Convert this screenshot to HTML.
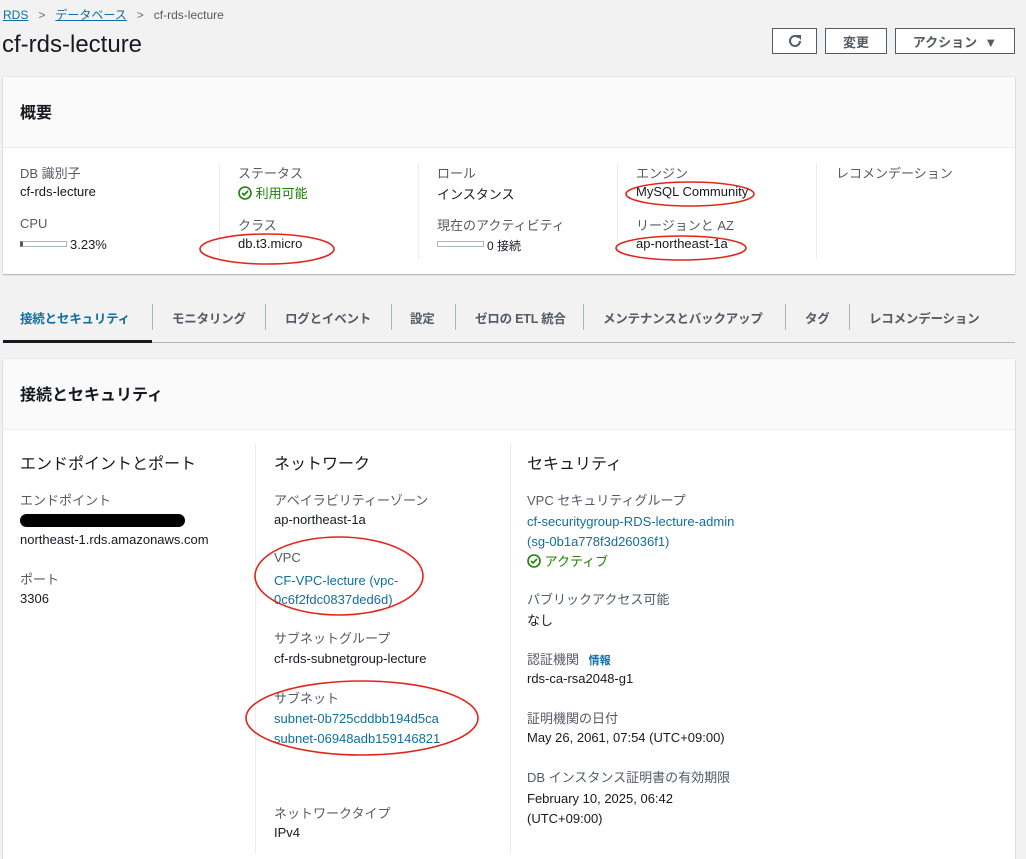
<!DOCTYPE html><html><head><meta charset="utf-8"><style>
body{margin:0;width:1026px;height:849px;background:#f2f2f2;font-family:"Liberation Sans","Noto Sans CJK JP",sans-serif;font-size:13px;color:#16191f;position:relative;overflow:hidden}
.a{position:absolute;white-space:nowrap}
.l{color:#545b64}
.k{color:#0f6f9e}
.g{color:#1d8102}
.card{position:absolute;left:3px;width:1012px;background:#fff;box-shadow:0 1px 1px rgba(0,0,0,.25),0 0 1px rgba(0,0,0,.2)}
.hd{background:#fafafa;border-bottom:1px solid #eaeded}
.vl{position:absolute;width:1px;background:#eaeded}
.btn{position:absolute;top:28px;height:26px;border:1px solid #545b64;background:#fff;font-weight:bold;font-size:13px;display:flex;align-items:center;justify-content:center;box-sizing:border-box;color:#545b64}
.bar{position:absolute;height:6px;border:1px solid #aab7b8;background:#fff;box-sizing:border-box}
.tab{position:absolute;top:308px;font-weight:bold;color:#545b64;font-size:12.5px;letter-spacing:-0.2px}
.ts{position:absolute;top:304px;height:26px;width:1px;background:#aab7b8}
</style></head><body>
<div class="a" style="left:3px;top:6px;font-size:12px"><span class="k" style="text-decoration:underline">RDS</span><span style="color:#687078;margin:0 10px">&gt;</span><span class="k" style="text-decoration:underline">データベース</span><span style="color:#687078;margin:0 10px">&gt;</span><span style="color:#545b64">cf-rds-lecture</span></div>
<div class="a" style="left:2px;top:31px;font-size:24px">cf-rds-lecture</div>
<div class="btn" style="left:772px;width:45px"><svg width="16" height="16" viewBox="0 0 16 16"><path d="M13 8a5 5 0 1 1-1.5-3.6" fill="none" stroke="#545b64" stroke-width="2"/><path d="M9 2h5v5z" fill="#545b64"/></svg></div>
<div class="btn" style="left:825px;width:62px">変更</div>
<div class="btn" style="left:895px;width:120px">アクション&nbsp;&nbsp;▼</div>

<div class="card" style="top:77px;height:197px">
<div class="hd" style="height:70px"><div class="a" style="left:17px;top:22px;font-size:16px;font-weight:bold">概要</div></div>
<div class="vl" style="left:216px;top:86px;height:96px"></div>
<div class="vl" style="left:415px;top:86px;height:96px"></div>
<div class="vl" style="left:614px;top:86px;height:96px"></div>
<div class="vl" style="left:813px;top:86px;height:96px"></div>
</div>
<div class="a l" style="left:20px;top:163px">DB 識別子</div>
<div class="a" style="left:20px;top:184px">cf-rds-lecture</div>
<div class="a l" style="left:20px;top:216px">CPU</div>
<div class="bar" style="left:20px;top:241px;width:47px;border-left:3px solid #545b64"></div>
<div class="a" style="left:70px;top:237px">3.23%</div>
<div class="a l" style="left:238px;top:163px">ステータス</div>
<div class="a g" style="left:238px;top:183px"><svg width="14" height="14" viewBox="0 0 14 14" style="vertical-align:-2px"><circle cx="7" cy="7" r="6" fill="none" stroke="#1d8102" stroke-width="1.6"/><path d="M4 7l2 2 4-4" fill="none" stroke="#1d8102" stroke-width="1.6"/></svg> 利用可能</div>
<div class="a l" style="left:238px;top:215px">クラス</div>
<div class="a" style="left:238px;top:236px">db.t3.micro</div>
<div class="a l" style="left:437px;top:163px">ロール</div>
<div class="a" style="left:437px;top:184px">インスタンス</div>
<div class="a l" style="left:437px;top:215px">現在のアクティビティ</div>
<div class="bar" style="left:437px;top:241px;width:47px"></div>
<div class="a" style="left:487px;top:237px;font-size:12px">0 接続</div>
<div class="a l" style="left:636px;top:163px">エンジン</div>
<div class="a" style="left:636px;top:184px">MySQL Community</div>
<div class="a l" style="left:636px;top:215px">リージョンと AZ</div>
<div class="a" style="left:636px;top:236px">ap-northeast-1a</div>
<div class="a l" style="left:836px;top:163px">レコメンデーション</div>

<div class="tab" style="left:20px;color:#0f6f9e">接続とセキュリティ</div>
<div class="ts" style="left:152px"></div>
<div class="tab" style="left:172px">モニタリング</div>
<div class="ts" style="left:265px"></div>
<div class="tab" style="left:285px">ログとイベント</div>
<div class="ts" style="left:391px"></div>
<div class="tab" style="left:410px">設定</div>
<div class="ts" style="left:455px"></div>
<div class="tab" style="left:475px">ゼロの ETL 統合</div>
<div class="ts" style="left:583px"></div>
<div class="tab" style="left:603px">メンテナンスとバックアップ</div>
<div class="ts" style="left:785px"></div>
<div class="tab" style="left:805px">タグ</div>
<div class="ts" style="left:849px"></div>
<div class="tab" style="left:869px">レコメンデーション</div>
<div class="a" style="left:3px;top:342px;width:1012px;height:1px;background:#aab7b8"></div>
<div class="a" style="left:3px;top:340px;width:149px;height:3px;background:#16191f"></div>

<div class="card" style="top:359px;height:500px">
<div class="hd" style="height:70px"><div class="a" style="left:17px;top:22px;font-size:16px;font-weight:bold">接続とセキュリティ</div></div>
<div class="vl" style="left:252px;top:85px;height:410px"></div>
<div class="vl" style="left:507px;top:85px;height:410px"></div>
</div>
<div class="a" style="left:20px;top:450px;font-size:16px">エンドポイントとポート</div>
<div class="a l" style="left:20px;top:490px">エンドポイント</div>
<div class="a" style="left:20px;top:514px;width:165px;height:13px;border-radius:7px;background:#000"></div>
<div class="a" style="left:20px;top:532px">northeast-1.rds.amazonaws.com</div>
<div class="a l" style="left:20px;top:569px">ポート</div>
<div class="a" style="left:20px;top:591px">3306</div>

<div class="a" style="left:274px;top:450px;font-size:16px">ネットワーク</div>
<div class="a l" style="left:274px;top:490px">アベイラビリティーゾーン</div>
<div class="a" style="left:274px;top:512px">ap-northeast-1a</div>
<div class="a l" style="left:274px;top:550px">VPC</div>
<div class="a k" style="left:274px;top:571px;line-height:19px">CF-VPC-lecture (vpc-<br>0c6f2fdc0837ded6d)</div>
<div class="a l" style="left:274px;top:628px">サブネットグループ</div>
<div class="a" style="left:274px;top:651px">cf-rds-subnetgroup-lecture</div>
<div class="a l" style="left:274px;top:688px">サブネット</div>
<div class="a k" style="left:274px;top:709px;line-height:20px">subnet-0b725cddbb194d5ca<br>subnet-06948adb159146821</div>
<div class="a l" style="left:274px;top:803px">ネットワークタイプ</div>
<div class="a" style="left:274px;top:825px">IPv4</div>

<div class="a" style="left:527px;top:450px;font-size:16px">セキュリティ</div>
<div class="a l" style="left:527px;top:490px">VPC セキュリティグループ</div>
<div class="a k" style="left:527px;top:512px;line-height:20px">cf-securitygroup-RDS-lecture-admin<br>(sg-0b1a778f3d26036f1)</div>
<div class="a g" style="left:527px;top:551px"><svg width="14" height="14" viewBox="0 0 14 14" style="vertical-align:-2px"><circle cx="7" cy="7" r="6" fill="none" stroke="#1d8102" stroke-width="1.6"/><path d="M4 7l2 2 4-4" fill="none" stroke="#1d8102" stroke-width="1.6"/></svg> アクティブ</div>
<div class="a l" style="left:527px;top:589px">パブリックアクセス可能</div>
<div class="a" style="left:527px;top:610px">なし</div>
<div class="a l" style="left:527px;top:649px">認証機関 <b class="k" style="font-size:11px;margin-left:6px">情報</b></div>
<div class="a" style="left:527px;top:671px">rds-ca-rsa2048-g1</div>
<div class="a l" style="left:527px;top:708px">証明機関の日付</div>
<div class="a" style="left:527px;top:730px">May 26, 2061, 07:54 (UTC+09:00)</div>
<div class="a l" style="left:527px;top:767px">DB インスタンス証明書の有効期限</div>
<div class="a" style="left:527px;top:789px;line-height:20px">February 10, 2025, 06:42<br>(UTC+09:00)</div>

<svg class="a" style="left:0;top:0" width="1026" height="849"><g fill="none" stroke="#e0261b" stroke-width="1.6">
<ellipse cx="267" cy="249" rx="67" ry="15"/>
<ellipse cx="690" cy="194" rx="64" ry="12"/>
<ellipse cx="681" cy="248" rx="65" ry="12"/>
<ellipse cx="339" cy="576" rx="84" ry="39"/>
<ellipse cx="362" cy="718" rx="116" ry="37"/>
</g></svg>
</body></html>
